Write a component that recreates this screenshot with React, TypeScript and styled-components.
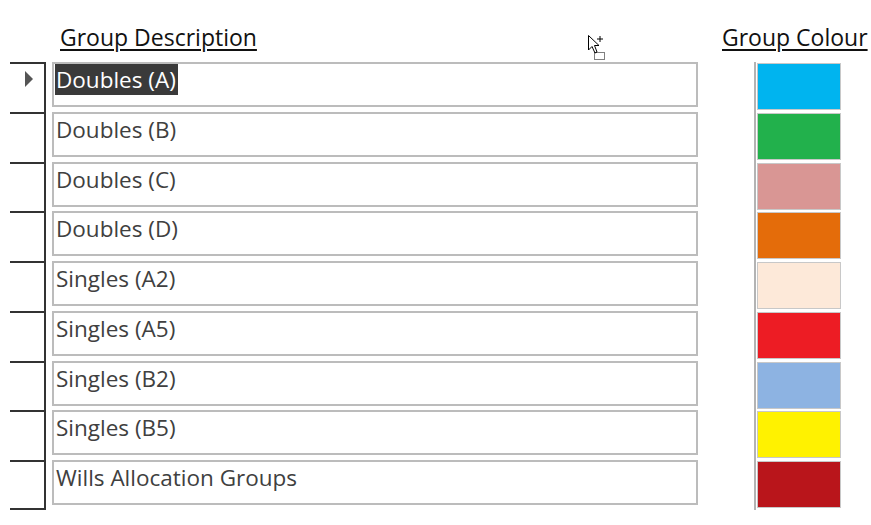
import * as React from 'react';
import styled, { createGlobalStyle } from 'styled-components';

const GlobalStyle = createGlobalStyle`
  html, body {
    margin: 0;
    padding: 0;
    background: #ffffff;
  }
  body {
    font-family: 'Open Sans', Lato, sans-serif;
  }
`;

const Page = styled('div')`
  position: relative;
  width: 871px;
  height: 525px;
  overflow: hidden;
  background: #fff;
`;

const Form = styled('div')`
  display: grid;
  grid-template-columns: 36px 652px 142px;
  padding: 22px 0 0 10px;
`;

const HeaderCell = styled('div')<{ $left: number }>`
  padding-left: ${(p) => p.$left}px;
  height: 40px;
  font-size: 23px;
  line-height: 30px;
  color: #111;
  white-space: nowrap;
`;

const HeaderText = styled('span')`
  text-decoration: underline;
  text-decoration-thickness: 2px;
  text-underline-offset: 3px;
`;

const Selector = styled('div')<{ $last?: boolean }>`
  height: 49.75px;
  box-sizing: border-box;
  border-top: 2px solid #333;
  border-right: 2px solid #333;
  border-bottom: ${(p) => (p.$last ? '2px solid #333' : 'none')};
  display: flex;
  align-items: flex-start;
  padding: 7px 0 0 14px;
`;

const DescCell = styled('div')`
  height: 49.75px;
  padding-left: 6px;
  box-sizing: border-box;
`;

const DescBox = styled('div')`
  height: 45px;
  box-sizing: border-box;
  border: 2px solid #bcbcbc;
  padding: 0 0 0 1px;
  font-size: 22.5px;
  color: #404040;
  line-height: 31px;
`;

const DescText = styled('span')<{ $selected?: boolean }>`
  display: inline-block;
  padding: 0 2px 0 1px;
  background: ${(p) => (p.$selected ? '#3a3a3a' : 'transparent')};
  color: ${(p) => (p.$selected ? '#ffffff' : '#404040')};
`;

const ColourCell = styled('div')`
  height: 49.75px;
  margin-left: 56px;
  width: 86px;
  box-sizing: border-box;
  border-left: 2px solid #b3b3b3;
  padding: 1px 0 0 1px;
`;

const Swatch = styled('div')<{ $colour: string }>`
  width: 84px;
  height: 47px;
  box-sizing: border-box;
  border: 1px solid #c8c8c8;
  background: ${(p) => p.$colour};
`;

const Cursor = styled('svg')`
  position: absolute;
  left: 587px;
  top: 34px;
`;

const groups = [
  { name: 'Doubles (A)', colour: '#00b4ef' },
  { name: 'Doubles (B)', colour: '#22b14c' },
  { name: 'Doubles (C)', colour: '#d99694' },
  { name: 'Doubles (D)', colour: '#e46c0a' },
  { name: 'Singles (A2)', colour: '#fde9d9' },
  { name: 'Singles (A5)', colour: '#ed1c24' },
  { name: 'Singles (B2)', colour: '#8db3e2' },
  { name: 'Singles (B5)', colour: '#fff200' },
  { name: 'Wills Allocation Groups', colour: '#b9151b' },
];

const RecordArrow = () => (
  <svg width="10" height="16" viewBox="0 0 10 16">
    <path d="M1 0 L9 8 L1 16 Z" fill="#555" />
  </svg>
);

const App: React.FC = () => {
  return (
    <Page>
      <GlobalStyle />
      <Form>
        <HeaderCell $left={0} />
        <HeaderCell $left={14}>
          <HeaderText>Group Description</HeaderText>
        </HeaderCell>
        <HeaderCell $left={24}>
          <HeaderText>Group Colour</HeaderText>
        </HeaderCell>
        {groups.map((g, i) => (
          <React.Fragment key={g.name}>
            <Selector $last={i === groups.length - 1}>{i === 0 && <RecordArrow />}</Selector>
            <DescCell>
              <DescBox>
                <DescText $selected={i === 0}>{g.name}</DescText>
              </DescBox>
            </DescCell>
            <ColourCell>
              <Swatch $colour={g.colour} />
            </ColourCell>
          </React.Fragment>
        ))}
      </Form>
      <Cursor width="20" height="28" viewBox="0 0 20 28">
        <path d="M1.5 1.5 L1.5 16 L5 12.5 L8 19 L10 18 L7.5 11.5 L12 11.5 Z" fill="#fff" stroke="#000" strokeWidth="1" />
        <path d="M13 2 L13 8 M10 5 L16 5" stroke="#000" strokeWidth="1" />
        <rect x="7.5" y="18.5" width="10" height="7" fill="none" stroke="#000" strokeWidth="1" strokeDasharray="1 1" />
      </Cursor>
    </Page>
  );
};

export default App;
